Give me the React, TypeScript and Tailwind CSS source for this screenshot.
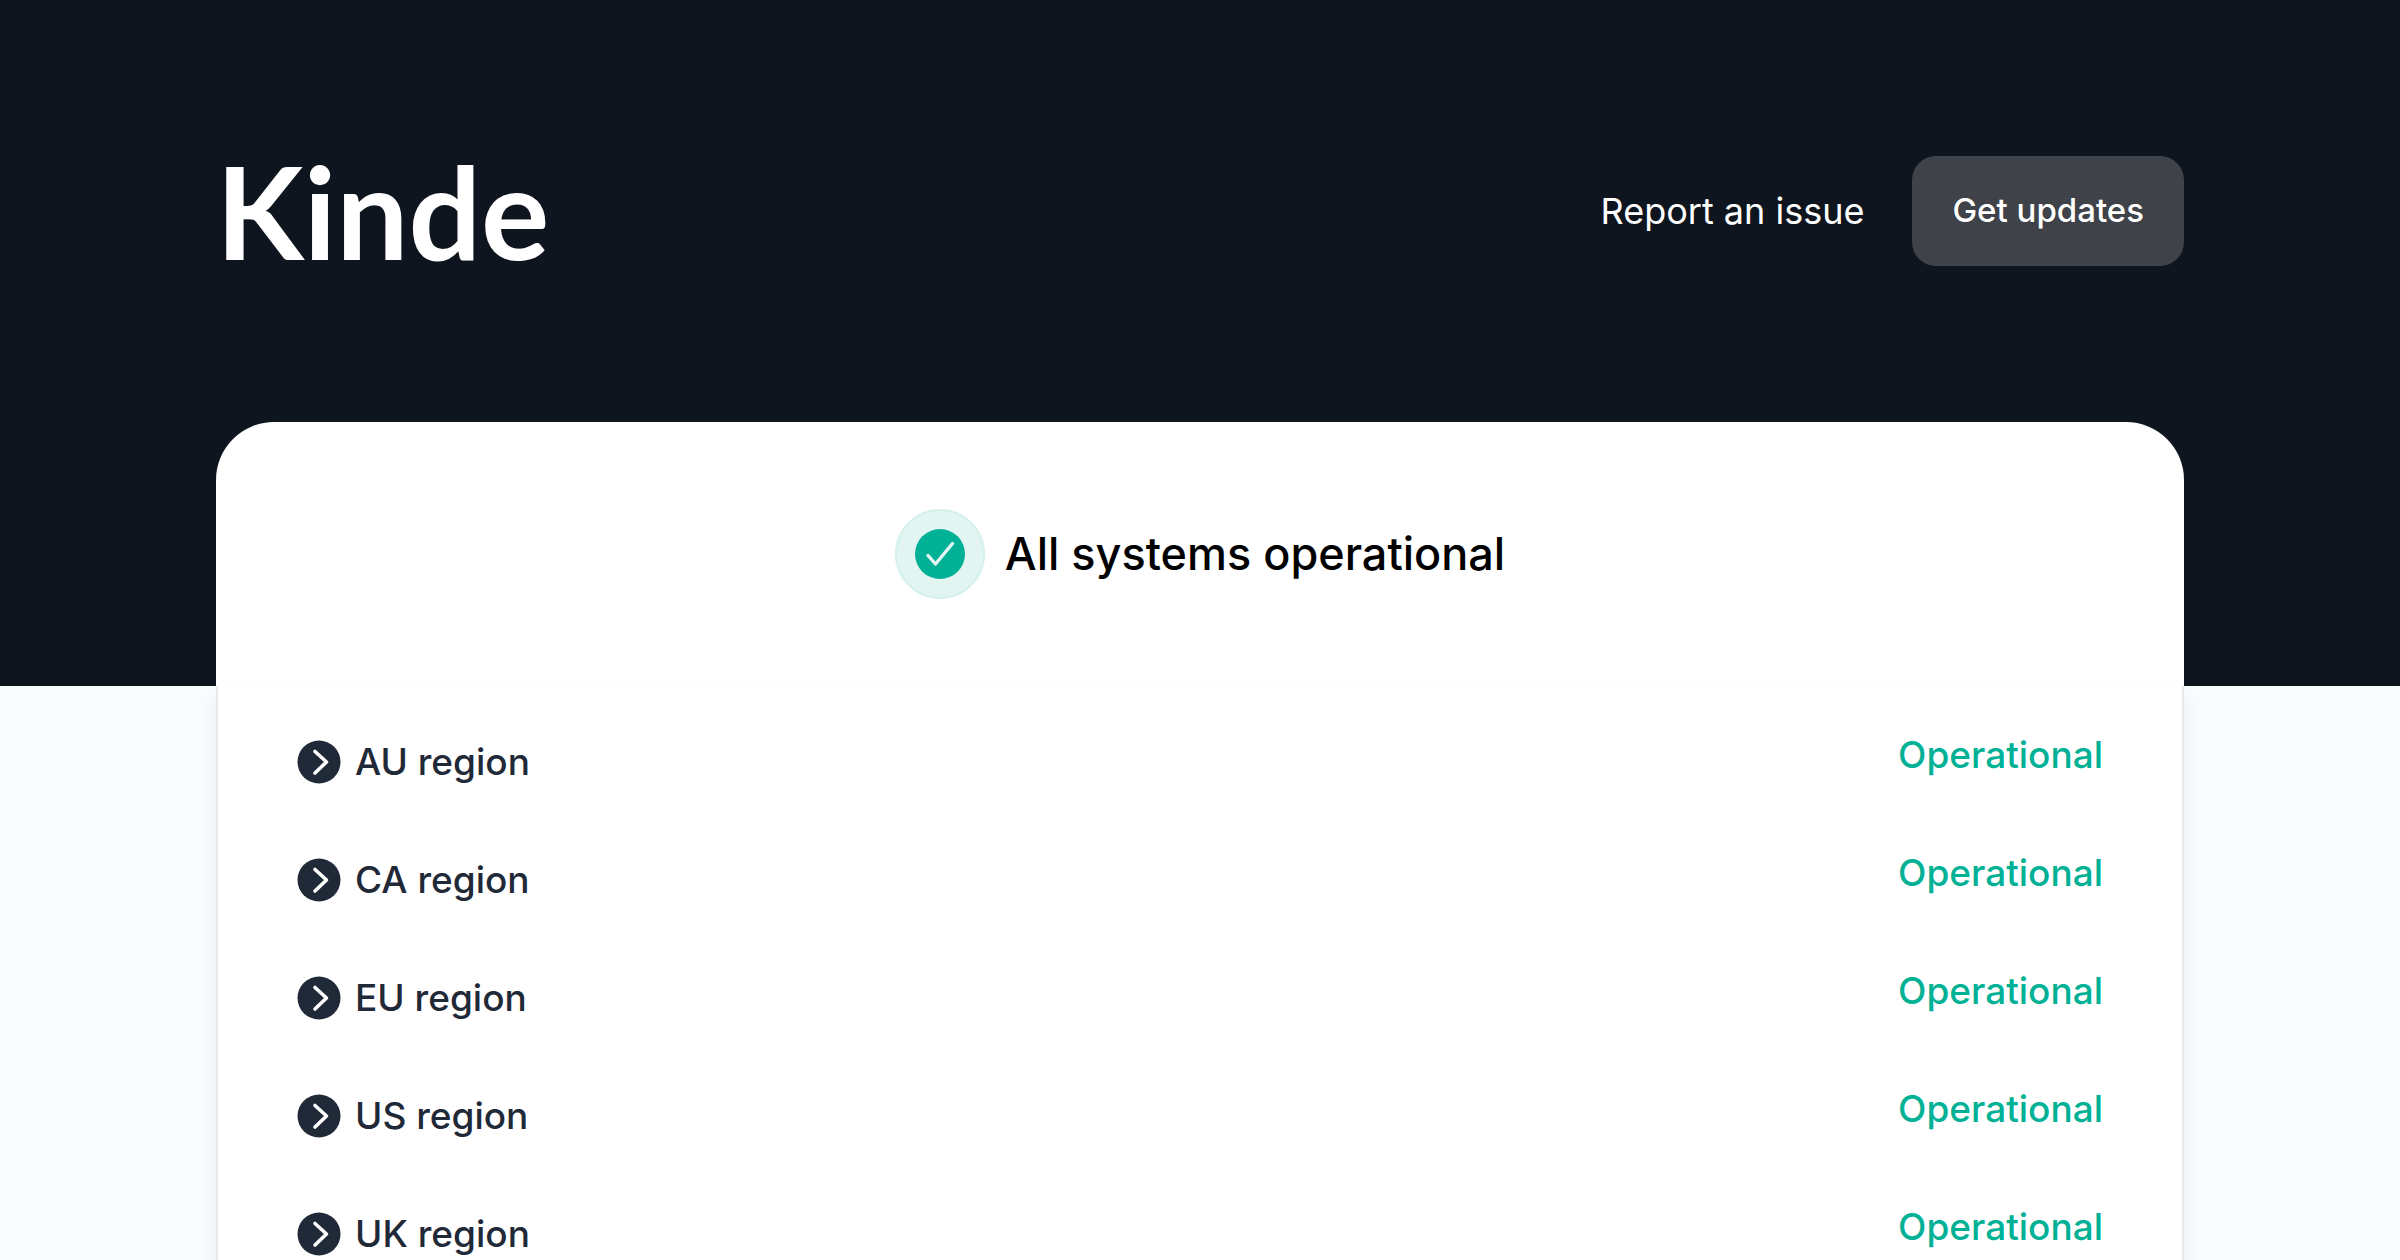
import React, { useState } from 'react';

interface Region {
  name: string;
  status: string;
}

const regions: Region[] = [
  { name: 'AU region', status: 'Operational' },
  { name: 'CA region', status: 'Operational' },
  { name: 'EU region', status: 'Operational' },
  { name: 'US region', status: 'Operational' },
  { name: 'UK region', status: 'Operational' },
];

function ChevronIcon({ open }: { open: boolean }) {
  return (
    <svg viewBox="0 0 44 44" className={open ? 'w-11 h-11 rotate-90' : 'w-11 h-11'} aria-hidden="true">
      <circle cx="22" cy="22" r="21.5" fill="#1f2937" />
      <path d="M18 11.5 29.5 22 18 33" fill="none" stroke="#fff" strokeWidth="3.6" strokeLinecap="round" strokeLinejoin="round" />
    </svg>
  );
}

function StatusIcon() {
  return (
    <span className="w-[90px] h-[90px] rounded-full border-2 border-[#d5f1ec] bg-[#e2f5f3] flex items-center justify-center">
      <svg viewBox="0 0 50 50" className="w-[50px] h-[50px]" aria-hidden="true">
        <circle cx="25" cy="25" r="25" fill="#00b196" />
        <path d="M13 26.500l7.500 8.500L37.500 14.500" fill="none" stroke="#e2f5f3" strokeWidth="3.4" strokeLinecap="round" strokeLinejoin="round" />
      </svg>
    </span>
  );
}

function RegionRow({ region }: { region: Region }) {
  const [open, setOpen] = useState(false);

  return (
    <li className="h-[118px] flex items-start justify-between text-[37px] font-medium">
      <button type="button" onClick={() => setOpen(o => !o)} aria-expanded={open} className="h-14 flex items-center gap-[14px] text-[#1f2937]">
        <ChevronIcon open={open} />
        {region.name}
      </button>
      <span className="leading-[42px] text-[#00b196]">{region.status}</span>
    </li>
  );
}

export default function App() {
  return (
    <div className="h-screen overflow-hidden flex flex-col bg-[#fafbfd] font-['Inter','Liberation_Sans',sans-serif]">
      <div className="shrink-0 bg-[#0f151e] px-[9%]">
        <header className="h-[422px] flex items-center justify-between">
          <a href="#" className="font-['Lato',sans-serif] font-bold text-[128px] leading-none text-white">Kinde</a>
          <nav className="flex items-center gap-12">
            <a href="#report" className="text-[36px] text-white">Report an issue</a>
            <button type="button" className="h-[110px] px-10 rounded-3xl bg-[#3f4248] text-[33px] font-medium text-white">Get updates</button>
          </nav>
        </header>
        <div className="h-[264px] rounded-t-[58px] bg-white flex items-start justify-center gap-5 pt-[87px]">
          <StatusIcon />
          <h1 className="text-[45px] leading-[90px] font-medium text-black">All systems operational</h1>
        </div>
      </div>
      <main className="grow shrink-0 mx-[9%] border-x-2 border-[#e5e7eb] bg-white px-[79px] pt-12 shadow-[0_8px_16px_rgba(0,0,0,0.06)]">
        <ul>
          {regions.map(r => (
            <RegionRow key={r.name} region={r} />
          ))}
        </ul>
      </main>
    </div>
  );
}
